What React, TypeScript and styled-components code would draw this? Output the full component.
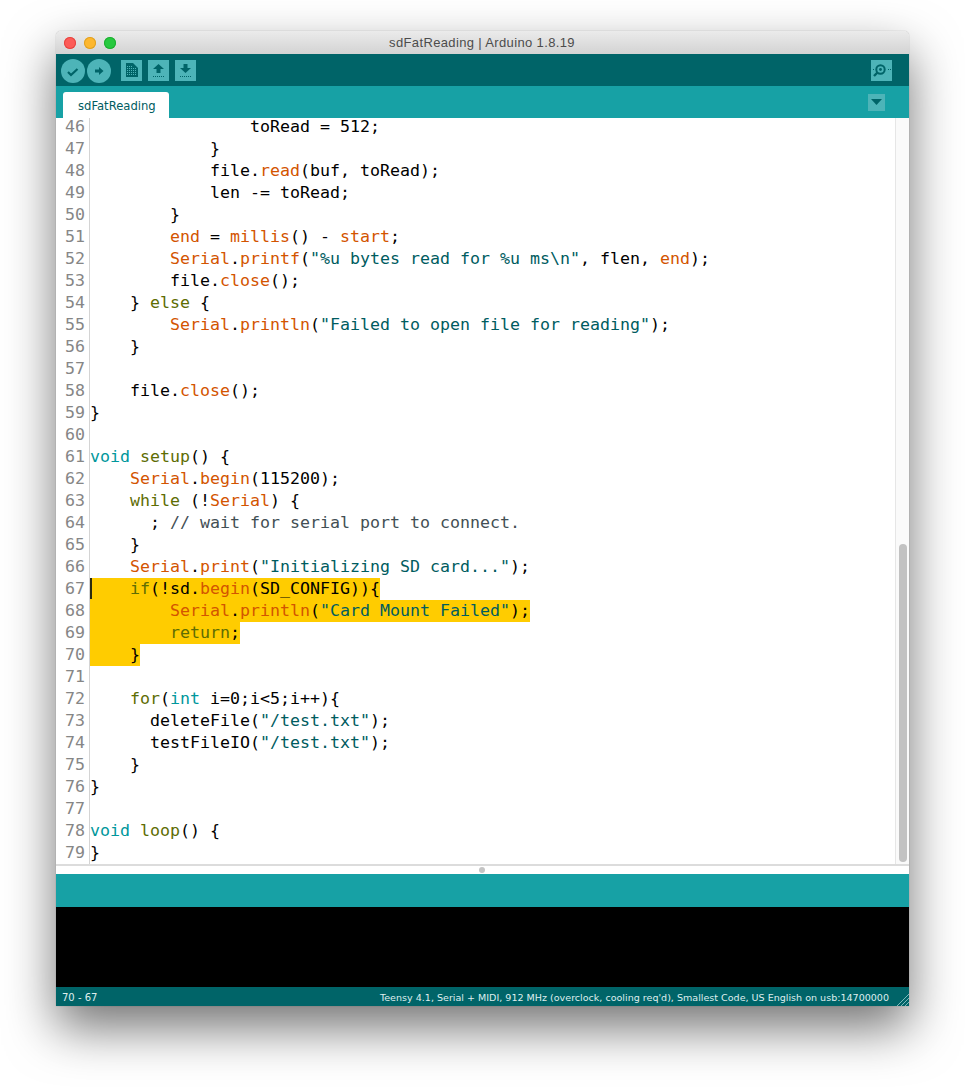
import React from 'react';
import styled, { createGlobalStyle } from 'styled-components';

const Global = createGlobalStyle`
  html, body { margin: 0; padding: 0; background: #fff; }
  body { width: 965px; height: 1087px; overflow: hidden; }
`;

const Page = styled.div`
  box-sizing: border-box;
  width: 965px;
  height: 1087px;
  padding: 31px 56px 0;
`;

const Window = styled.div`
  width: 853px;
  height: 975px;
  display: flex;
  flex-direction: column;
  border-radius: 5px 5px 0 0;
  box-shadow: 0 0 1px rgba(0,0,0,.45), 0 22px 50px rgba(0,0,0,.55);
  overflow: hidden;
  background: #fff;
`;

const TitleBar = styled.div`
  flex: 0 0 23px;
  position: relative;
  display: flex;
  align-items: center;
  justify-content: center;
  padding-right: 1px;
  box-sizing: border-box;
  background: linear-gradient(#ebebeb, #d3d3d3);
  font: 13px "Liberation Sans", Arial, sans-serif;
  letter-spacing: .36px;
  color: #4c4c4c;
`;

const Lights = styled.div`
  position: absolute;
  left: 8px;
  top: 6px;
  display: flex;
  gap: 8px;
`;

const Light = styled.span<{ $c: string; $b: string }>`
  width: 12px;
  height: 12px;
  border-radius: 50%;
  background: ${p => p.$c};
  box-shadow: inset 0 0 0 1px ${p => p.$b};
`;

const Toolbar = styled.div`
  flex: 0 0 32px;
  box-sizing: border-box;
  display: flex;
  align-items: flex-start;
  padding: 5px 17px 0 5px;
  background: #006468;
`;

const RoundButton = styled.button`
  width: 24px;
  height: 24px;
  margin-right: 2px;
  padding: 0;
  border: 0;
  border-radius: 50%;
  background: #4db4b8;
  display: flex;
  align-items: center;
  justify-content: center;
`;

const SquareButton = styled.button<{ $ml?: number }>`
  width: 21px;
  height: 21px;
  margin: 1px 0 0 ${p => p.$ml ?? 6}px;
  padding: 0;
  border: 0;
  background: #4db4b8;
  display: flex;
  align-items: center;
  justify-content: center;
`;

const Spacer = styled.div`
  flex: 1;
`;

const TabBar = styled.div`
  flex: 0 0 32px;
  box-sizing: border-box;
  display: flex;
  align-items: flex-end;
  padding: 0 24px 0 7px;
  background: #17a1a5;
`;

const Tab = styled.div`
  width: 106px;
  height: 26px;
  box-sizing: border-box;
  padding: 7px 0 0 15px;
  background: #fff;
  border-radius: 3px 3px 0 0;
  color: #005c5f;
  font: 11.6px/15px "DejaVu Sans", sans-serif;
`;

const TabMenu = styled.div`
  width: 17px;
  height: 17px;
  align-self: center;
  background: #4db4b8;
  display: flex;
  align-items: center;
  justify-content: center;
`;

const Editor = styled.div`
  flex: 0 0 746px;
  display: flex;
  overflow: hidden;
  border-bottom: 2px solid #dcdcdc;
`;

const Code = styled.div`
  flex: 1;
  font-family: "DejaVu Sans Mono", monospace;
  font-size: 16.61px;
  line-height: 22px;
`;

const Row = styled.div`
  display: flex;
  height: 22px;

  &:first-child {
    height: 20px;
    line-height: 18px;
  }
`;

const LineNo = styled.div`
  flex: 0 0 29px;
  text-align: right;
  color: #868686;
`;

const GutterRule = styled.div`
  flex: 0 0 1px;
  margin-left: 4px;
  background: #d4d4d4;
`;

const Text = styled.div`
  position: relative;
  white-space: pre;
  color: #000;
`;

const Mark = styled.span`
  display: inline-block;
  height: 22px;
  background: #ffcc00;
`;

const Caret = styled.span`
  position: absolute;
  left: 0;
  top: 0;
  width: 2px;
  height: 21px;
  background: #2b2b10;
`;

const Tok = styled.span<{ $k: string }>`
  color: ${p =>
    ({ o: '#d35400', g: '#5e6d03', t: '#00979c', s: '#005c5f', c: '#434f54', k: '#000' } as Record<string, string>)[p.$k]};
`;

const Scrollbar = styled.div`
  flex: 0 0 14px;
  box-sizing: border-box;
  border-left: 1px solid #e6e6e6;
  background: #fafafa;
  display: flex;
  flex-direction: column;
  justify-content: flex-end;
  align-items: center;
`;

const Thumb = styled.div`
  width: 8px;
  height: 318px;
  margin: 0 0 2px 1px;
  border-radius: 4px;
  background: #c2c2c2;
`;

const Divider = styled.div`
  flex: 0 0 8px;
  display: flex;
  align-items: center;
  justify-content: center;
  padding-right: 1px;
  background: #fff;
`;

const Dot = styled.div`
  width: 6px;
  height: 6px;
  border-radius: 50%;
  background: #c4c4c4;
`;

const StatusBar = styled.div`
  flex: 0 0 33px;
  background: #17a1a5;
`;

const Console = styled.div`
  flex: 0 0 80px;
  background: #000;
`;

const Footer = styled.div`
  flex: 1;
  position: relative;
  display: flex;
  align-items: center;
  justify-content: space-between;
  padding: 3px 20px 0 6px;
  background: #006468;
  color: #dfeeee;
  font: 10px/16px "DejaVu Sans", sans-serif;
`;

const BoardInfo = styled.span`
  font-size: 9.55px;
`;

const Grip = styled.svg`
  position: absolute;
  right: 0;
  bottom: 0;
`;

type T = [string, string];
const k = (s: string): T => ['k', s];
const o = (s: string): T => ['o', s];
const g = (s: string): T => ['g', s];
const t = (s: string): T => ['t', s];
const s = (x: string): T => ['s', x];
const c = (x: string): T => ['c', x];

type Line = { n: number; toks: T[]; hl?: boolean; caret?: boolean };
const raw: [number, T[], boolean?, boolean?][] = [
  [46, [k('                toRead = 512;')]],
  [47, [k('            }')]],
  [48, [k('            file.'), o('read'), k('(buf, toRead);')]],
  [49, [k('            len -= toRead;')]],
  [50, [k('        }')]],
  [51, [k('        '), o('end'), k(' = '), o('millis'), k('() - '), o('start'), k(';')]],
  [52, [k('        '), o('Serial'), k('.'), o('printf'), k('('), s('"%u bytes read for %u ms\\n"'), k(', flen, '), o('end'), k(');')]],
  [53, [k('        file.'), o('close'), k('();')]],
  [54, [k('    } '), g('else'), k(' {')]],
  [55, [k('        '), o('Serial'), k('.'), o('println'), k('('), s('"Failed to open file for reading"'), k(');')]],
  [56, [k('    }')]],
  [57, []],
  [58, [k('    file.'), o('close'), k('();')]],
  [59, [k('}')]],
  [60, []],
  [61, [t('void'), k(' '), g('setup'), k('() {')]],
  [62, [k('    '), o('Serial'), k('.'), o('begin'), k('(115200);')]],
  [63, [k('    '), g('while'), k(' (!'), o('Serial'), k(') {')]],
  [64, [k('      ; '), c('// wait for serial port to connect.')]],
  [65, [k('    }')]],
  [66, [k('    '), o('Serial'), k('.'), o('print'), k('('), s('"Initializing SD card..."'), k(');')]],
  [67, [k('    '), g('if'), k('(!sd.'), o('begin'), k('(SD_CONFIG)){')], true, true],
  [68, [k('        '), o('Serial'), k('.'), o('println'), k('('), s('"Card Mount Failed"'), k(');')], true],
  [69, [k('        '), g('return'), k(';')], true],
  [70, [k('    }')], true],
  [71, []],
  [72, [k('    '), g('for'), k('('), t('int'), k(' i=0;i<5;i++){')]],
  [73, [k('      deleteFile('), s('"/test.txt"'), k(');')]],
  [74, [k('      testFileIO('), s('"/test.txt"'), k(');')]],
  [75, [k('    }')]],
  [76, [k('}')]],
  [77, []],
  [78, [t('void'), k(' '), g('loop'), k('() {')]],
  [79, [k('}')]],
];
const lines: Line[] = raw.map(([n, toks, hl, caret]) => ({ n, toks, hl, caret }));

const Ink = '#006468';
const Face = '#4db4b8';

export default function App() {
  return (
    <Page>
      <Global />
      <Window>
        <TitleBar>
          <Lights>
            <Light $c="#fc5b57" $b="#e5443f" />
            <Light $c="#fdb72e" $b="#dfa023" />
            <Light $c="#27c93f" $b="#1eae31" />
          </Lights>
          sdFatReading | Arduino 1.8.19
        </TitleBar>
        <Toolbar>
          <RoundButton aria-label="Verify">
            <svg width="24" height="24" viewBox="0 0 24 24">
              <path d="M7 13L10 16L16.5 10" fill="none" stroke={Ink} strokeWidth="2.2" />
            </svg>
          </RoundButton>
          <RoundButton aria-label="Upload">
            <svg width="24" height="24" viewBox="0 0 24 24">
              <path d="M8 10.5H12V8L16.5 12L12 16V13.5H8Z" fill={Ink} />
            </svg>
          </RoundButton>
          <SquareButton $ml={8} aria-label="New">
            <svg width="21" height="21" viewBox="0 0 21 21">
              <path d="M5 3H12L17 8V17H5Z" fill={Ink} />
              <path
                d="M6 6.5H11M6 8.5H15M6 10.5H15M6 12.5H15M6 14.5H15"
                stroke={Face}
                strokeWidth="1"
                strokeDasharray="1 1"
              />
            </svg>
          </SquareButton>
          <SquareButton aria-label="Open">
            <svg width="21" height="21" viewBox="0 0 21 21">
              <path d="M10.5 4L16 9H12.5V13H8.5V9H5Z" fill={Ink} />
              <path d="M5 16.5H16" stroke={Ink} strokeWidth="1" strokeDasharray="1 1" />
            </svg>
          </SquareButton>
          <SquareButton aria-label="Save">
            <svg width="21" height="21" viewBox="0 0 21 21">
              <path d="M8.5 4H12.5V8H16L10.5 13L5 8H8.5Z" fill={Ink} />
              <path d="M5 16.5H16" stroke={Ink} strokeWidth="1" strokeDasharray="1 1" />
            </svg>
          </SquareButton>
          <Spacer />
          <SquareButton aria-label="Serial monitor">
            <svg width="21" height="21" viewBox="0 0 21 21">
              <circle cx="9.5" cy="9.5" r="4.2" fill="none" stroke={Ink} strokeWidth="2" />
              <circle cx="9.5" cy="9.5" r="1.4" fill={Ink} />
              <path d="M6.5 12.5L3 16" stroke={Ink} strokeWidth="2.4" />
              <path d="M2 9.5H3M17 9.5H20" stroke={Ink} strokeWidth="1" strokeDasharray="1 1" />
            </svg>
          </SquareButton>
        </Toolbar>
        <TabBar>
          <Tab>sdFatReading</Tab>
          <Spacer />
          <TabMenu>
            <svg width="11" height="6" viewBox="0 0 11 6">
              <path d="M0 0H11L5.5 6Z" fill={Ink} />
            </svg>
          </TabMenu>
        </TabBar>
        <Editor>
          <Code>
            {lines.map(l => (
              <Row key={l.n}>
                <LineNo>{l.n}</LineNo>
                <GutterRule />
                <Text>
                  {l.hl ? (
                    <Mark>{l.toks.map((x, i) => <Tok key={i} $k={x[0]}>{x[1]}</Tok>)}</Mark>
                  ) : (
                    l.toks.map((x, i) => <Tok key={i} $k={x[0]}>{x[1]}</Tok>)
                  )}
                  {l.caret && <Caret />}
                </Text>
              </Row>
            ))}
          </Code>
          <Scrollbar>
            <Thumb />
          </Scrollbar>
        </Editor>
        <Divider>
          <Dot />
        </Divider>
        <StatusBar />
        <Console />
        <Footer>
          <span>70 - 67</span>
          <BoardInfo>Teensy 4.1, Serial + MIDI, 912 MHz (overclock, cooling req'd), Smallest Code, US English on usb:14700000</BoardInfo>
          <Grip width="12" height="12" viewBox="0 0 12 12">
            <path d="M0 12L12 0M4 12L12 4M8 12L12 8" stroke="#7fb9bb" strokeWidth="1" />
          </Grip>
        </Footer>
      </Window>
    </Page>
  );
}
